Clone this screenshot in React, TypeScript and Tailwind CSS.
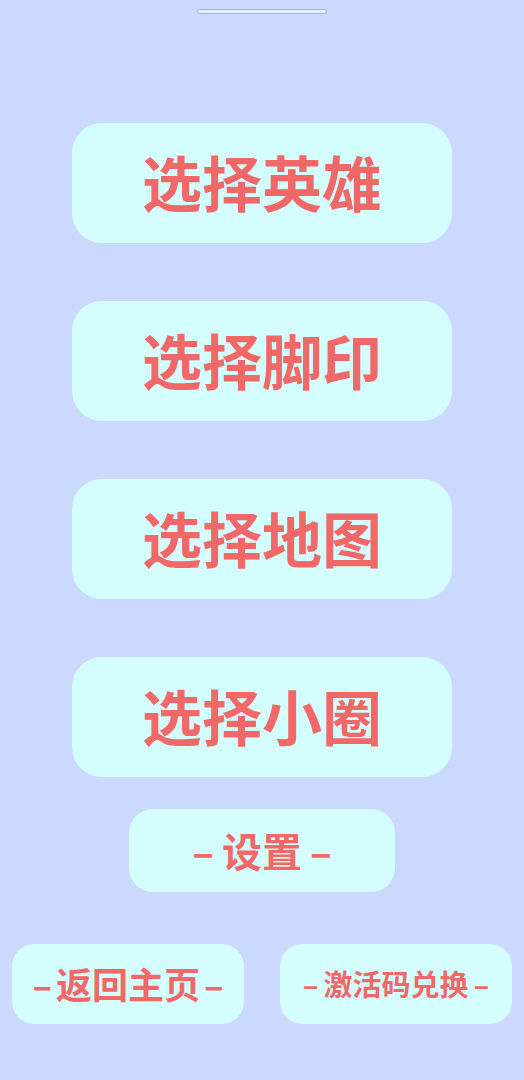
import React from 'react';

const font = { fontFamily: '"Noto Sans CJK SC", "Noto Sans", sans-serif' };

const bigItems = ['选择英雄', '选择脚印', '选择地图', '选择小圈'];

// small button label with dashes on both sides
const Dashed: React.FC<{ text: string; gap: string }> = ({ text, gap }) => (
  <span className={`flex items-center ${gap}`}>
    <span className="font-semibold">–</span>
    <span>{text}</span>
    <span className="font-semibold">–</span>
  </span>
);

const App: React.FC = () => {
  return (
    <div className="w-[524px] h-[1080px] bg-[#cbd9fe] flex flex-col items-center relative overflow-hidden" style={font}>
      <div className="mt-[9px] w-[130px] h-[5px] rounded-full bg-[#e4efff] border border-[#a9b5cf]"></div>

      <div className="mt-[109px] flex flex-col gap-[58px]">
        {bigItems.map((label) => (
          <button
            key={label}
            className="w-[380px] h-[120px] pb-[5px] rounded-[30px] bg-[#d4fefe] flex items-center justify-center text-[#f06868] text-[60px] font-bold leading-none"
          >
            {label}
          </button>
        ))}
      </div>

      <button className="mt-[32px] w-[266px] h-[83px] pb-[2px] rounded-[24px] bg-[#d4fefe] flex items-center justify-center text-[#f06868] text-[40px] font-bold leading-none">
        <Dashed text="设置" gap="gap-[8px]" />
      </button>

      <div className="mt-[52px] w-full px-[12px] flex justify-between">
        <button className="w-[232px] h-[80px] pb-[2px] rounded-[22px] bg-[#d4fefe] flex items-center justify-center text-[#f06868] text-[36px] font-bold leading-none">
          <Dashed text="返回主页" gap="gap-[4px]" />
        </button>
        <button className="w-[232px] h-[80px] pb-[2px] rounded-[22px] bg-[#d4fefe] flex items-center justify-center text-[#f06868] text-[29px] font-bold leading-none">
          <Dashed text="激活码兑换" gap="gap-[5px]" />
        </button>
      </div>
    </div>
  );
};

export default App;
